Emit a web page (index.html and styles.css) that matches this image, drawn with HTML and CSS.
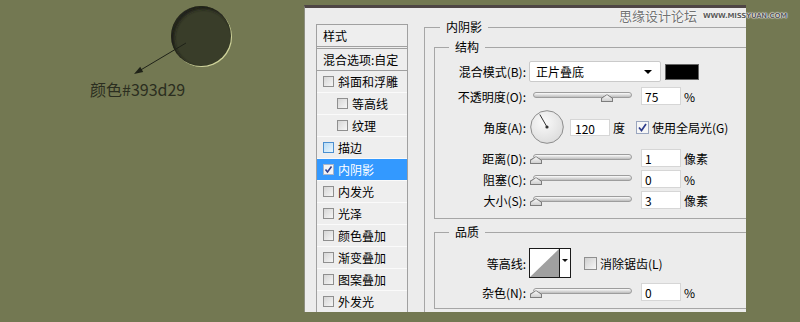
FILE: index.html
```html
<!DOCTYPE html>
<html lang="zh-CN">
	<head>
		<meta charset="UTF-8" />
		<meta name="viewport" content="width=device-width, initial-scale=1.0" />
		<title>内阴影</title>
		<link rel="stylesheet" href="styles.css">
	</head>

	<body>
		<div class="stage">
			<div class="swatch-area">
				<svg class="swatch-art" width="304" height="79" viewBox="0 0 304 79">
					<defs>
						<clipPath id="disc">
							<circle cx="201" cy="36" r="30" />
						</clipPath>
						<filter id="soft" x="-20%" y="-20%" width="140%" height="140%">
							<feGaussianBlur stdDeviation="1.4" />
						</filter>
					</defs>
					<circle cx="202" cy="37" r="30" fill="#cfd39a" />
					<circle cx="201" cy="36" r="30" fill="#393d29" />
					<g clip-path="url(#disc)">
						<circle cx="203.5" cy="38.5" r="31.5" fill="none" stroke="#1c1e13" stroke-width="4" filter="url(#soft)" />
					</g>
					<line x1="186" y1="43" x2="138" y2="71.6" stroke="#1f2218" stroke-width="1" />
					<polygon points="134,74 143.2,72 140.2,66.8" fill="#1f2218" />
				</svg>
				<p class="swatch-label">颜色#393d29</p>
			</div>

			<div class="dialog">
				<div class="style-list">
					<div class="list-head">样式</div>
					<div class="list-blend">混合选项:自定</div>
					<div class="list-item"><span class="box"></span>斜面和浮雕</div>
					<div class="list-item sub"><span class="box"></span>等高线</div>
					<div class="list-item sub"><span class="box"></span>纹理</div>
					<div class="list-item"><span class="box tinted"></span>描边</div>
					<div class="list-item selected"><span class="box checked">
						<svg width="9" height="9" viewBox="0 0 9 9"><path d="M1.5 4.5 L3.5 7 L7.5 1.5" fill="none" stroke="#2d3c8c" stroke-width="1.6" /></svg>
					</span>内阴影</div>
					<div class="list-item"><span class="box"></span>内发光</div>
					<div class="list-item"><span class="box"></span>光泽</div>
					<div class="list-item"><span class="box"></span>颜色叠加</div>
					<div class="list-item"><span class="box"></span>渐变叠加</div>
					<div class="list-item"><span class="box"></span>图案叠加</div>
					<div class="list-item"><span class="box"></span>外发光</div>
				</div>

				<div class="settings">
					<fieldset class="group outer">
						<legend>内阴影</legend>
						<div class="outer-body">
							<fieldset class="group structure">
								<legend>结构</legend>
								<div class="group-body">
									<div class="row blend-row">
										<label class="row-label">混合模式(B):</label>
										<div class="select">正片叠底<span class="caret"></span></div>
										<span class="color-chip"></span>
									</div>
									<div class="row">
										<label class="row-label">不透明度(O):</label>
										<div class="slider"><span class="thumb" style="left: 68px"></span></div>
										<span class="field">75</span>
										<span class="unit">%</span>
									</div>
									<div class="row angle-row">
										<label class="row-label">角度(A):</label>
										<svg class="dial" width="34" height="34" viewBox="0 0 34 34">
											<defs>
												<radialGradient id="dialFill" cx="40%" cy="35%" r="70%">
													<stop offset="0" stop-color="#fafafa" />
													<stop offset="1" stop-color="#dcdcdc" />
												</radialGradient>
											</defs>
											<circle cx="17" cy="17" r="16.3" fill="url(#dialFill)" stroke="#8c8c8c" />
											<line x1="17" y1="17" x2="9.8" y2="4.5" stroke="#333" stroke-width="1" />
											<circle cx="17" cy="17" r="1.6" fill="#333" />
										</svg>
										<span class="field angle-field">120</span>
										<span class="unit">度</span>
										<span class="check checked">
											<svg width="11" height="11" viewBox="0 0 11 11"><path d="M2 5.5 L4.5 8.5 L9 2" fill="none" stroke="#2d3c8c" stroke-width="1.7" /></svg>
										</span>
										<span class="check-text">使用全局光(G)</span>
									</div>
									<div class="row">
										<label class="row-label">距离(D):</label>
										<div class="slider"><span class="thumb" style="left: -3px"></span></div>
										<span class="field">1</span>
										<span class="unit">像素</span>
									</div>
									<div class="row tight">
										<label class="row-label">阻塞(C):</label>
										<div class="slider"><span class="thumb" style="left: -3px"></span></div>
										<span class="field">0</span>
										<span class="unit">%</span>
									</div>
									<div class="row tight">
										<label class="row-label">大小(S):</label>
										<div class="slider"><span class="thumb" style="left: -3px"></span></div>
										<span class="field">3</span>
										<span class="unit">像素</span>
									</div>
								</div>
							</fieldset>

							<fieldset class="group quality">
								<legend>品质</legend>
								<div class="group-body">
									<div class="row contour-row">
										<label class="row-label">等高线:</label>
										<svg class="contour" width="42" height="30" viewBox="0 0 42 30">
											<rect x="0.5" y="0.5" width="41" height="29" fill="#fff" stroke="#1a1a1a" />
											<polygon points="1,29 30,1 30,29" fill="#a0a0a0" />
											<line x1="30.5" y1="1" x2="30.5" y2="29" stroke="#1a1a1a" />
											<polygon points="33,11 39,11 36,14" fill="#111" />
										</svg>
										<span class="check"></span>
										<span class="check-text">消除锯齿(L)</span>
									</div>
									<div class="row">
										<label class="row-label">杂色(N):</label>
										<div class="slider"><span class="thumb" style="left: -3px"></span></div>
										<span class="field">0</span>
										<span class="unit">%</span>
									</div>
								</div>
							</fieldset>
						</div>
					</fieldset>
				</div>
			</div>
		</div>

		<div class="watermark">
			<span class="wm-cn">思缘设计论坛</span>
			<span class="wm-en">WWW.MISSYUAN.COM</span>
		</div>
	</body>
</html>
```

FILE: styles.css
```css
html, body {
	margin: 0;
	padding: 0;
}

body {
	width: 800px;
	height: 322px;
	overflow: hidden;
	position: relative;
	background-color: #737852;
	font-family: "Noto Sans CJK SC", "Noto Sans", sans-serif;
	font-size: 12px;
	color: #000;
}

.stage {
	display: flex;
	align-items: flex-start;
}

.swatch-area {
	width: 304px;
	flex-shrink: 0;
}

.swatch-art {
	display: block;
}

.swatch-label {
	margin: 0 0 0 90px;
	font-size: 16px;
	line-height: 20px;
	color: #2b2e20;
}

/* dialog */

.dialog {
	box-sizing: border-box;
	width: 442px;
	height: 307px;
	margin-top: 5px;
	padding: 16px 0 0 11px;
	border-top: 3px solid #4e4545;
	border-left: 1px solid #8d8f80;
	background-color: #ececec;
	display: flex;
	overflow: hidden;
}

.style-list {
	box-sizing: border-box;
	width: 92px;
	flex-shrink: 0;
	border: 1px solid #a0a0a0;
	border-bottom: none;
	background-color: #eeeeee;
	line-height: 21px;
}

.list-head {
	height: 21px;
	padding-left: 6px;
	border-bottom: 1px solid #a0a0a0;
}

.list-blend {
	height: 21px;
	margin-top: 1px;
	padding-left: 6px;
	border-top: 1px solid #a0a0a0;
	border-bottom: 1px solid #a0a0a0;
	white-space: nowrap;
}

.list-item {
	display: flex;
	align-items: center;
	gap: 4px;
	height: 21px;
	padding-left: 6px;
	border-bottom: 1px solid #fafafa;
	white-space: nowrap;
}

.list-item.sub {
	padding-left: 20px;
}

.list-item.selected {
	background-color: #3399ff;
	color: #fff;
}

.box {
	box-sizing: border-box;
	width: 11px;
	height: 11px;
	flex-shrink: 0;
	border: 1px solid #8f8f8f;
	background: linear-gradient(135deg, #d6d6d6, #f6f6f6);
	display: flex;
	align-items: center;
	justify-content: center;
}

.box.tinted {
	border-color: #4a8fd0;
	background: linear-gradient(135deg, #b9dcf5, #e8f5fd);
}

.box.checked {
	background: #f4f4f4;
	border-color: #a9b4c8;
}

/* settings */

.settings {
	margin-left: 16px;
	margin-top: -4px;
	flex: 1;
	min-width: 0;
}

.group {
	margin: 0;
	padding: 0;
	min-width: 0;
	border: 1px solid #a6a6a6;
	border-right: none;
}

.group legend {
	line-height: 14px;
	padding: 0 6px;
}

.outer {
	border-bottom: none;
	height: 300px;
}

.outer legend {
	margin-left: 15px;
}

.outer-body {
	padding-left: 9px;
}

.structure,
.quality {
	margin-top: 6px;
}

.structure legend,
.quality legend {
	margin-left: 14px;
}

.structure .group-body {
	padding: 7px 0 9px;
}

.quality .group-body {
	padding: 9px 0 7px;
}

.group-body {
	display: flex;
	flex-direction: column;
	gap: 5px;
}

.row {
	display: flex;
	align-items: center;
	height: 18px;
	white-space: nowrap;
}

.blend-row {
	height: 21px;
}

.row.tight {
	margin-top: -2px;
}

.angle-row {
	height: 34px;
}

.contour-row {
	height: 30px;
}

.row-label {
	width: 91px;
	flex-shrink: 0;
	text-align: right;
	margin-right: 3px;
}

.select {
	box-sizing: border-box;
	width: 132px;
	height: 21px;
	padding-left: 6px;
	line-height: 19px;
	border: 1px solid #cacaca;
	border-radius: 2px;
	background-color: #fff;
	display: flex;
	align-items: center;
	justify-content: space-between;
}

.caret {
	width: 0;
	height: 0;
	margin-right: 8px;
	border-left: 4px solid transparent;
	border-right: 4px solid transparent;
	border-top: 4px solid #000;
}

.color-chip {
	box-sizing: border-box;
	width: 34px;
	height: 16px;
	margin-left: 4px;
	border: 1px solid #666;
	background-color: #000;
}

.slider {
	position: relative;
	width: 99px;
	height: 18px;
	margin-left: 4px;
	flex-shrink: 0;
}

.slider::before {
	content: "";
	position: absolute;
	left: 0;
	right: 0;
	top: 5px;
	height: 4px;
	border: 1px solid #9d9d9d;
	border-radius: 3px;
	background: linear-gradient(#fbfbfb, #bdbdbd);
}

.thumb {
	position: absolute;
	top: 7px;
	width: 12px;
	height: 8px;
	background: linear-gradient(#ffffff, #c9c9c9);
	clip-path: polygon(0 45%, 50% 0, 100% 45%, 100% 100%, 0 100%);
}

.thumb::after {
	content: "";
	position: absolute;
	inset: 0;
	background: #7d7d7d;
	clip-path: polygon(0 45%, 50% 0, 100% 45%, 100% 100%, 0 100%, 0 45%, 1px calc(45% + 1px), 1px calc(100% - 1px), calc(100% - 1px) calc(100% - 1px), calc(100% - 1px) calc(45% + 1px), 50% 1px, 1px calc(45% + 1px));
}

.field {
	box-sizing: border-box;
	width: 40px;
	height: 18px;
	margin-left: 9px;
	padding-left: 3px;
	line-height: 17px;
	border: 1px solid #d6d6d6;
	background-color: #fff;
}

.unit {
	margin-left: 3px;
}

.dial {
	margin-left: 1px;
	flex-shrink: 0;
}

.angle-field {
	height: 17px;
	margin-left: 6px;
	padding-left: 4px;
}

.check {
	box-sizing: border-box;
	width: 13px;
	height: 13px;
	margin-left: 11px;
	margin-right: 3px;
	border: 1px solid #8f8f8f;
	background: linear-gradient(135deg, #cfcfcf, #f7f7f7);
	display: flex;
	align-items: center;
	justify-content: center;
}

.check.checked {
	background: #f6f6f6;
	border-color: #9aa6bf;
}

.contour {
	flex-shrink: 0;
}

.contour-row .check {
	margin-left: 13px;
}

/* watermark over the dialog corner */

.watermark {
	position: absolute;
	top: 8px;
	left: 619px;
	display: flex;
	align-items: center;
	gap: 6px;
	white-space: nowrap;
	color: #727272;
	text-shadow: 0 0 1px #fff, 0 0 1px #fff, 0 0 2px #fff;
}

.wm-cn {
	font-size: 13px;
	line-height: 16px;
}

.wm-en {
	font-family: "DejaVu Sans", sans-serif;
	font-weight: bold;
	font-size: 7px;
	line-height: 10px;
	letter-spacing: -0.2px;
	color: #5d5d5d;
}
```
